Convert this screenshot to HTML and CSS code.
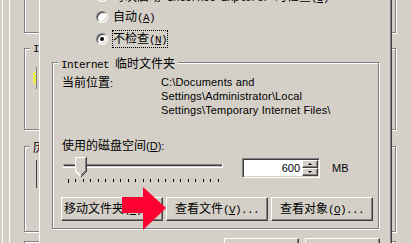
FILE: index.html
```html
<!DOCTYPE html>
<html lang="zh-CN">
  <head>
    <meta charset="UTF-8">
    <title>Internet 临时文件设置</title>
    <link rel="stylesheet" href="styles.css">
  </head>
  <body>
    <div class="screen">
      <div class="back back-left">
        <div class="frame f1"></div>
        <div class="frame f2">
          <div class="caption hw">Internet</div>
          <svg class="stub-icon" width="10" height="22" viewBox="0 0 10 22">
            <path d="M3.5 0v22" stroke="#808080" />
            <polyline points="2,5 0.5,7 2.5,9 0.5,11 2.5,13 0.5,15 2.5,17" fill="none" stroke="#ffff00" stroke-width="1.2" />
          </svg>
        </div>
        <div class="frame f3">
          <div class="caption zh">历史记录</div>
          <div class="stub-line"></div>
        </div>
        <div class="frame f4"></div>
      </div>

      <div class="page">
        <div class="radio-row first">
          <span class="radio"></span>
          <span class="label"><span class="zh">每次启动</span><span class="hw"> Internet Explorer </span><span class="zh">时检查</span><span class="hw">(<u>S</u>)</span></span>
        </div>
        <div class="radio-row">
          <span class="radio"></span>
          <span class="label"><span class="zh">自动</span><span class="hw">(<u>A</u>)</span></span>
        </div>
        <div class="radio-row">
          <span class="radio checked"></span>
          <span class="label focus"><span class="zh">不检查</span><span class="hw">(<u>N</u>)</span></span>
        </div>

        <div class="group">
          <div class="caption"><span class="hw">Internet </span><span class="zh">临时文件夹</span></div>
          <div class="location">
            <span class="loc-label"><span class="zh">当前位置</span>:</span>
            <div class="loc-path">C:\Documents and<br>Settings\Administrator\Local<br>Settings\Temporary Internet Files\</div>
          </div>
          <div class="space-label"><span class="zh">使用的磁盘空间</span>(<u>D</u>):</div>
          <div class="slider-row">
            <svg class="slider" width="162" height="30" viewBox="0 0 162 30" shape-rendering="crispEdges">
              <rect x="1" y="8" width="160" height="1" fill="#808080" />
              <rect x="2" y="9" width="158" height="1" fill="#404040" />
              <rect x="1" y="11" width="160" height="1" fill="#ffffff" />
              <rect x="160" y="8" width="1" height="4" fill="#ffffff" />
              <polygon points="13,1 25,1 25,15 19,21 13,15" fill="#d4d0c8" />
              <polyline points="13.5,15 13.5,1.5 24,1.5" fill="none" stroke="#ffffff" />
              <polyline points="23.5,2 23.5,15 19,19.5" fill="none" stroke="#808080" />
              <polyline points="24.5,1 24.5,15.5 19,21" fill="none" stroke="#404040" />
              <polyline points="13.5,15 18.5,20" fill="none" stroke="#ffffff" />
              <path d="M6.5 23v4M13.5 23v3M21.5 23v3M28.5 23v3M36.5 23v3M43.5 23v3M51.5 23v3M58.5 23v3M66.5 23v3M73.5 23v3M81.5 23v3M88.5 23v3M96.5 23v3M103.5 23v3M111.5 23v3M118.5 23v3M126.5 23v3M133.5 23v3M141.5 23v3M148.5 23v3M156.5 23v3" stroke="#000000" />
            </svg>
            <div class="spin">
              <span class="spin-value">600</span>
              <span class="spin-buttons">
                <span class="spin-btn"><span class="tri up"></span></span>
                <span class="spin-btn"><span class="tri down"></span></span>
              </span>
            </div>
            <span class="unit">MB</span>
          </div>
          <div class="btn-row">
            <button class="btn"><span class="zh">移动文件夹</span><span class="hw">(<u>M</u>)...</span></button>
            <button class="btn"><span class="zh">查看文件</span><span class="hw">(<u>V</u>)...</span></button>
            <button class="btn"><span class="zh">查看对象</span><span class="hw">(<u>O</u>)...</span></button>
          </div>
        </div>

        <div class="dlg-buttons">
          <button class="btn small"><span class="zh">确定</span></button>
          <button class="btn small"><span class="zh">取消</span></button>
        </div>
      </div>

      <div class="back back-right">
        <div class="frame f1"></div>
        <div class="frame f2"></div>
        <div class="frame f3"></div>
        <div class="frame f4"></div>
      </div>

      <svg class="arrow" width="45" height="44" viewBox="0 0 45 44">
        <polygon points="0,10 21,10 21,0 44,21 21,43 21,26 0,26" fill="#ff0033" />
      </svg>
    </div>
  </body>
</html>
```

FILE: styles.css
```css
body{
  margin: 0;
  background-color: #d4d0c8;
  font-family: 'Liberation Sans', 'Noto Sans CJK SC', sans-serif;
  font-size: 11px;
  color: #000;
}
.screen{
  position: relative;
  display: flex;
  width: 411px;
  height: 243px;
  overflow: hidden;
}
.zh{
  font-family: 'Noto Sans CJK SC', sans-serif;
  font-size: 12px;
}
.hw{
  font-family: 'Liberation Mono', monospace;
  font-size: 11px;
  letter-spacing: -0.6px;
  white-space: pre;
}
u{
  text-decoration: underline;
  text-underline-offset: 1px;
}

/* dialogs behind the page */
.back{
  display: flex;
  flex-direction: column;
  height: 243px;
  overflow: hidden;
}
.back-left{
  width: 39px;
  padding-left: 24px;
  box-sizing: border-box;
  background-image: linear-gradient(#fff, #fff), linear-gradient(#fff, #fff);
  background-size: 1px 100%, 1px 100%;
  background-position: 2px 0, 9px 0;
  background-repeat: no-repeat;
}
.back-right{
  width: 19px;
}
.frame{
  flex: none;
  display: flex;
  flex-direction: column;
  box-sizing: border-box;
  border: 1px solid #808080;
  box-shadow: inset 1px 1px #fff, 1px 1px 0 #fff;
}
.back-left .frame{
  width: 40px;
}
.back-right .frame{
  width: 14px;
  margin-left: -10px;
}
.f1{
  margin-top: -20px;
  height: 53px;
}
.f2{
  margin-top: 15px;
  height: 82px;
}
.f3{
  margin-top: 16px;
  height: 86px;
}
.f4{
  margin-top: 9px;
  height: 30px;
}
.caption{
  align-self: flex-start;
  margin: -7px 0 0 5px;
  padding: 0 3px;
  line-height: 14px;
  height: 14px;
  background-color: #d4d0c8;
  white-space: nowrap;
}
.stub-icon{
  display: block;
  margin: 11px 0 0 8px;
}
.stub-line{
  width: 1px;
  height: 28px;
  margin: 6px 0 0 11px;
  background-color: #404040;
}

/* property page */
.page{
  width: 353px;
  flex: none;
  display: flex;
  flex-direction: column;
  box-sizing: border-box;
  border-left: 1px solid #fff;
  border-right: 1px solid #404040;
  box-shadow: inset -1px 0 #808080;
}
.radio-row{
  display: flex;
  align-items: center;
  height: 22px;
  padding-left: 56px;
  flex: none;
}
.radio-row.first{
  margin-top: -16px;
  align-items: flex-end;
}
.radio-row.first .radio{
  margin-bottom: 4px;
}
.radio{
  position: relative;
  width: 12px;
  height: 12px;
  box-sizing: border-box;
  border-radius: 50%;
  border: 1px solid;
  border-color: #808080 #fff #fff #808080;
  box-shadow: inset 1px 1px #404040, inset -1px -1px #d4d0c8;
  background-color: #fff;
}
.radio.checked::after{
  content: '';
  position: absolute;
  left: 3px;
  top: 3px;
  width: 4px;
  height: 4px;
  border-radius: 50%;
  background-color: #000;
}
.label{
  margin-left: 4px;
  border: 1px dotted transparent;
  line-height: 13px;
  white-space: nowrap;
}
.label.focus{
  border-color: #000;
}

.group{
  flex: none;
  display: flex;
  flex-direction: column;
  width: 327px;
  height: 167px;
  margin: 12px 0 0 12px;
  box-sizing: border-box;
  border: 1px solid #808080;
  box-shadow: inset 1px 1px #fff, 1px 1px 0 #fff;
}
.location{
  display: flex;
  margin-top: 5px;
  padding-left: 9px;
  line-height: 14px;
}
.loc-label{
  width: 99px;
  flex: none;
}
.loc-path{
  white-space: nowrap;
  letter-spacing: 0.15px;
}
.space-label{
  margin-top: 21px;
  padding-left: 9px;
  line-height: 14px;
  height: 14px;
  white-space: nowrap;
}
.slider-row{
  display: flex;
  align-items: flex-start;
  margin-top: 4px;
  padding-left: 9px;
  height: 30px;
}
.slider{
  display: block;
  flex: none;
}
.spin{
  display: flex;
  align-items: center;
  width: 78px;
  height: 20px;
  margin: 2px 0 0 18px;
  box-sizing: border-box;
  border: 1px solid;
  border-color: #808080 #fff #fff #808080;
  box-shadow: inset 1px 1px #404040, inset -1px -1px #d4d0c8;
  background-color: #fff;
  padding: 1px 1px 1px 0;
}
.spin-value{
  flex: 1;
  text-align: right;
  padding-right: 2px;
  line-height: 14px;
}
.spin-buttons{
  display: flex;
  flex-direction: column;
  width: 16px;
  height: 16px;
}
.spin-btn{
  display: flex;
  align-items: center;
  justify-content: center;
  height: 8px;
  box-sizing: border-box;
  background-color: #d4d0c8;
  border: 1px solid;
  border-color: #fff #404040 #404040 #fff;
  box-shadow: inset -1px -1px #808080;
}
.tri{
  width: 0;
  height: 0;
  border-left: 2px solid transparent;
  border-right: 2px solid transparent;
}
.tri.up{
  border-bottom: 2px solid #000;
}
.tri.down{
  border-top: 2px solid #000;
}
.unit{
  margin: 5px 0 0 12px;
  line-height: 14px;
}
.btn-row{
  display: flex;
  gap: 3px;
  margin-top: 11px;
  padding-left: 8px;
}
.btn{
  width: 102px;
  height: 24px;
  padding: 0;
  box-sizing: border-box;
  border: 1px solid;
  border-color: #fff #404040 #404040 #fff;
  box-shadow: inset -1px -1px #808080;
  background-color: #d4d0c8;
  color: #000;
  font: inherit;
  line-height: 14px;
  white-space: nowrap;
  overflow: hidden;
}
.btn.small{
  width: 75px;
  height: 23px;
}
.dlg-buttons{
  display: flex;
  justify-content: flex-end;
  gap: 6px;
  margin-top: 9px;
  padding-right: 11px;
}

.arrow{
  position: absolute;
  left: 122px;
  top: 187px;
}
```
